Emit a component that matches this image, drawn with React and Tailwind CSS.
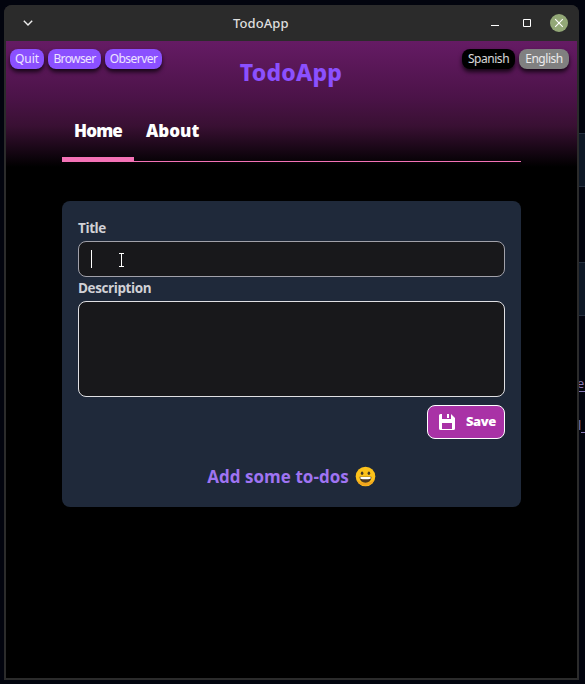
import React from "react";

function PillButton({ label, className }) {
  return (
    <button className={`flex h-5 items-center justify-center rounded-lg text-[12px] whitespace-nowrap text-white/85 shadow-[0_3px_4px_rgba(0,0,0,0.75)] ${className}`}>
      {label}
    </button>
  );
}

function TitleBar() {
  return (
    <div className="flex h-9 w-full shrink-0 items-center bg-[#2b2b2b] text-white">
      <div className="w-[100px] pl-[18px]">
        <svg width="12" height="12" viewBox="0 0 12 12" fill="none" stroke="#eee" strokeWidth="1.4"><path d="M1.8 3.8 6 8l4.2-4.2" /></svg>
      </div>
      <div className="flex-1 pt-px pl-[129px] font-['Noto_Sans',sans-serif] text-[13px] font-medium tracking-[0.1px] text-[#dedede]">TodoApp</div>
      <div className="flex items-center pr-[11px]">
        <svg width="8" height="18" viewBox="0 0 8 18"><path d="M0 11h8v1H0z" fill="#fff" /></svg>
        <svg className="ml-6" width="8" height="8" viewBox="0 0 8 8" fill="none" stroke="#fff"><path d="M.5.5h7v7h-7z" /></svg>
        <svg className="ml-[19px]" width="18" height="18" viewBox="0 0 18 18"><circle cx="9" cy="9" r="9" fill="#93a877" /><path d="m5.2 5.2 7.6 7.6m0-7.6-7.6 7.6" stroke="#fff" strokeWidth="1.1" /></svg>
      </div>
    </div>
  );
}

function GrinningFace() {
  return (
    <svg className="-mt-[2px] ml-[6px]" width="21" height="21" viewBox="0 0 21 21">
      <circle cx="10.5" cy="10.5" r="9.8" fill="#fcc21b" />
      <path d="M1.5 13.8a9.8 9.8 0 0 0 18 0c-4 4-14 4-18 0" fill="#f2a51f" />
      <ellipse cx="7.1" cy="7.2" rx="1.3" ry="1.7" fill="#473b25" />
      <ellipse cx="13.9" cy="7.2" rx="1.3" ry="1.7" fill="#473b25" />
      <path d="M4.6 10.8h11.8c0 3.8-2.5 5.9-5.9 5.9s-5.9-2.1-5.9-5.9" fill="#4c3820" />
      <path d="M5.4 11h10.2v1.7c-3 .8-7.2.8-10.2 0z" fill="#fff" />
    </svg>
  );
}

export default function App() {
  return (
    <div className="flex h-[684px] w-[585px] overflow-hidden bg-[#02040e] pt-[5px] pl-1 font-['Open_Sans','Noto_Sans',sans-serif]">
      <div className="flex h-[675px] w-[575px] shrink-0 flex-col overflow-hidden rounded-t-lg bg-[#2b2b2b]">
        <TitleBar />
        <div className="mx-[2px] flex h-[637px] flex-col bg-black bg-[linear-gradient(to_bottom,#651b64_0px,#4c1349_55px,#391033_85px,#000_126px)]">
          <div className="flex h-[77px] items-start justify-between pt-2 pr-2 pl-1">
            <div className="flex w-[229px] gap-1 font-['Noto_Sans',sans-serif]">
              <PillButton label="Quit" className="w-[34px] bg-[#8b50ff]" />
              <PillButton label="Browser" className="w-[53px] bg-[#8b50ff] tracking-[-0.6px]" />
              <PillButton label="Observer" className="w-[57px] bg-[#8b50ff] tracking-[-0.55px]" />
            </div>
            <h1 className="mt-[7px] w-[104px] text-center font-['Noto_Sans',sans-serif] text-[23px] leading-8 font-extrabold tracking-[0.2px] whitespace-nowrap text-[#8b50ff]">TodoApp</h1>
            <div className="flex w-[226px] justify-end gap-1 font-['Noto_Sans',sans-serif]">
              <PillButton label="Spanish" className="w-[53px] bg-black tracking-[-0.45px]" />
              <PillButton label="English" className="w-[50px] bg-[#808080] tracking-[-0.45px]" />
            </div>
          </div>
          <nav className="mx-14 flex h-11 items-end border-b border-[#f472b6] text-[17px] font-extrabold text-white">
            <div className="-mb-px flex h-11 w-[72px] justify-center border-b-[5px] border-[#f472b6] pt-px leading-6 tracking-[-0.9px]">Home</div>
            <div className="h-[43px] pt-px pl-3 leading-6">About</div>
          </nav>
          <form className="mx-14 mt-[39px] flex h-[306px] flex-col rounded-lg bg-[#1f293a] px-4 pt-4">
            <label className="h-6 text-[13.5px] leading-[23px] font-bold tracking-[-0.4px] text-[#d1d1d6]">Title</label>
            <div className="flex h-9 items-center rounded-lg border border-[#a1a1aa] bg-[#18181b] pl-3">
              <span className="h-[18px] w-px bg-white" />
              <svg className="ml-[26px]" width="7" height="15" viewBox="0 0 7 15" fill="none"><path d="M1 1.5h5M1 14.5h5M3.5 2v12" stroke="#fff" /></svg>
            </div>
            <label className="h-6 text-[13.5px] leading-[23px] font-bold tracking-[-0.4px] text-[#d1d1d6]">Description</label>
            <div className="h-24 rounded-lg border border-[#e0e0e4] bg-[#18181b]" />
            <button className="mt-2 ml-auto flex h-[34px] w-[78px] items-center rounded-lg border border-white bg-[#a932a6] pl-[11px] text-[13px] font-extrabold text-white">
              <svg width="16" height="16" viewBox="0 0 16 16"><path fill="#fff" fillRule="evenodd" d="M0 1.5Q0 0 1.5 0H3v5h9V0l4 4v10.5q0 1.5-1.5 1.5h-13Q0 16 0 14.5zM3 9v6h10V9zM8 0h2v4H8z" /></svg>
              <span className="ml-[11px] tracking-[-0.4px]">Save</span>
            </button>
            <div className="mt-[25px] flex h-[26px] items-center justify-center text-[17px] font-bold whitespace-nowrap text-[#9f74f2]">
              <span className="-mt-px tracking-[0.05px]">Add some to-dos</span>
              <GrinningFace />
            </div>
          </form>
        </div>
      </div>
      <div className="w-[6px] shrink-0 overflow-hidden pt-32 text-[13px] text-[#8879b8]">
        <div className="h-[54px] border-y border-[#252f3e] bg-[#0e1826]" />
        <div className="mt-[75px] h-[54px] border-y border-[#252f3e] bg-[#0e1826]" />
        <div className="mt-[60px] h-4 border-b border-[#8879b8] leading-[14px]"><span className="-ml-[2px]">e</span></div>
        <div className="mt-[26px] ml-[2px] h-[15px] border-b border-[#8879b8] leading-[14px]"><span className="-ml-[3px]">l</span></div>
      </div>
    </div>
  );
}
